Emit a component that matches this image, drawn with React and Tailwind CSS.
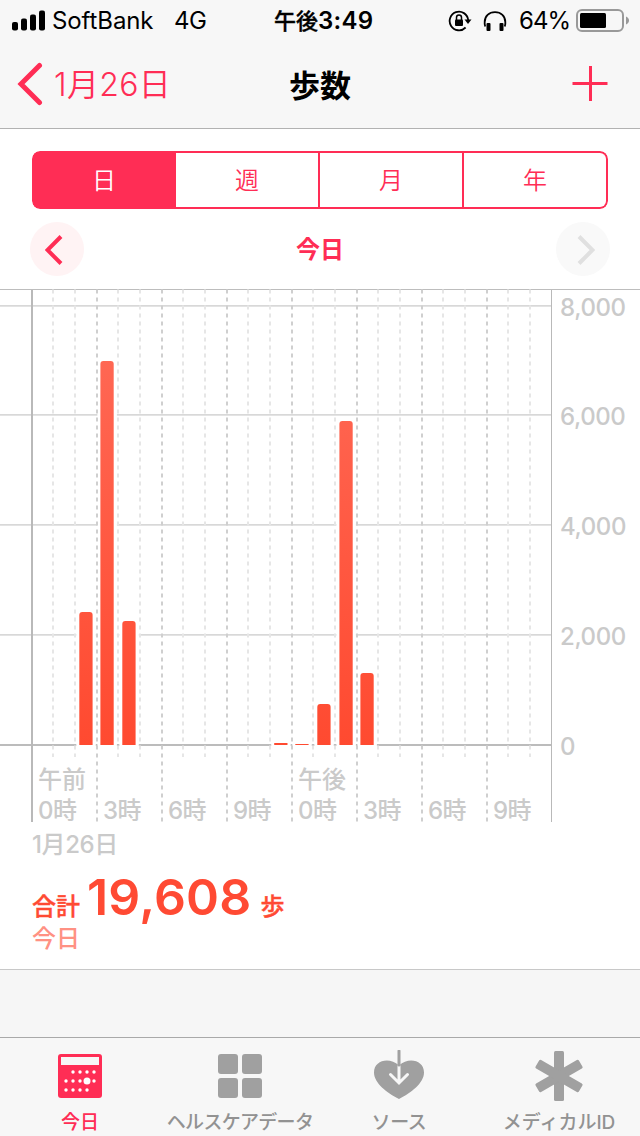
import { useState } from "react";

const periods = ["日", "週", "月", "年"];

// one bar per hour that has steps
const bars = [
  { x: 79.3, top: 612 },
  { x: 100.4, top: 361 },
  { x: 122.3, top: 621 },
  { x: 274.2, top: 743 },
  { x: 295.3, top: 744 },
  { x: 317.3, top: 704 },
  { x: 339.4, top: 421 },
  { x: 360.4, top: 673 },
];

const yLabels = [
  { y: 306, text: "8,000" },
  { y: 415, text: "6,000" },
  { y: 525, text: "4,000" },
  { y: 635, text: "2,000" },
  { y: 745, text: "0" },
];

const hourLabels = ["0時", "3時", "6時", "9時", "0時", "3時", "6時", "9時"];

function StatusBar() {
  return (
    <div className="relative flex h-[42px] items-center justify-between pl-3 pr-[11px] text-[24px] text-black">
      <div className="flex items-center">
        <svg className="-mt-[1px]" width="34" height="22" viewBox="0 0 34 22">
          <rect x="0" y="12" width="6" height="8.5" rx="2" />
          <rect x="9" y="8.5" width="6" height="12" rx="2" />
          <rect x="18" y="4.5" width="6" height="16" rx="2" />
          <rect x="27" y="0.5" width="6" height="20" rx="2" />
        </svg>
        <span className="ml-[6px] w-[122px] tracking-[-0.1px]">SoftBank</span>
        <span className="tracking-[-0.5px]">4G</span>
      </div>
      <div className="absolute left-[274px] top-0 flex h-[42px] items-center whitespace-nowrap font-semibold">
        <span className="text-[22px] font-medium [-webkit-text-stroke:0.4px_black]">午後</span>
        <span className="text-[24px] tracking-[0.3px]">3:49</span>
      </div>
      <div className="flex items-center">
        <svg className="-mt-[1px]" width="24" height="24" viewBox="0 0 24 24" fill="none" stroke="#000" strokeWidth="1.8">
          <path d="M17.6 18.5A9.3 9.3 0 1 1 20.2 11" />
          <path d="M16.5 10.5h7l-3.5 4.5z" fill="#000" stroke="none" />
          <rect x="7" y="10.5" width="8" height="6.5" rx="1" fill="#000" stroke="none" />
          <path d="M8.500 11V8.500a2.500 2.500 0 0 1 5 0V11" strokeWidth="1.5" />
        </svg>
        <svg className="-mt-[1px] ml-[11px]" width="24" height="24" viewBox="0 0 24 24" fill="none" stroke="#000" strokeWidth="1.8">
          <path d="M2.200 17.500A10.200 10.200 0 0 1 1.700 13C1.700 7 6 3.100 12 3.100S22.300 7 22.300 13a10.200 10.200 0 0 1-.500 4.500" />
          <rect x="3.5" y="14" width="4" height="8" rx="1" fill="#000" stroke="none" />
          <rect x="16.500" y="14" width="4" height="8" rx="1" fill="#000" stroke="none" />
        </svg>
        <span className="ml-3 w-[51px] tracking-[-0.9px]">64%</span>
        <svg className="-mt-[2px] ml-[6px]" width="53" height="24" viewBox="0 0 53 24">
          <rect x="1" y="2" width="46" height="21" rx="5" fill="none" stroke="#999" strokeWidth="2" />
          <rect x="4" y="5" width="26" height="15" rx="1.5" />
          <path d="M50 8.500c4 1.500 4 6.500 0 8z" fill="#999" />
        </svg>
      </div>
    </div>
  );
}

function NavBar() {
  return (
    <div className="grid h-[86px] grid-cols-3 items-center">
      <button className="flex items-center pl-[17px] text-[32px] text-[#ff2d55]">
        <svg className="-mt-[2px]" width="26" height="44" viewBox="0 0 26 44" fill="none" stroke="currentColor" strokeWidth="5" strokeLinecap="round" strokeLinejoin="miter">
          <path d="M22.500 3.500L4 22l18.500 18.500" />
        </svg>
        <span className="ml-[11px] whitespace-nowrap font-[350] tracking-[0.3px]">1月26日</span>
      </button>
      <h1 className="text-center text-[31px] font-bold leading-none text-black">歩数</h1>
      <svg className="-mt-[3px] mr-8 justify-self-end" width="36" height="36" viewBox="0 0 36 36" stroke="#ff2d55" strokeWidth="3">
        <path d="M0.500 17.500h35M18.500 0v35" />
      </svg>
    </div>
  );
}

function Chart() {
  const hours = Array.from({ length: 23 }, (_, i) => i + 1);
  return (
    <svg className="block shrink-0" width="640" height="543" viewBox="0 289 640 543">
      <defs>
        <linearGradient id="steps" gradientUnits="userSpaceOnUse" x1="0" y1="306" x2="0" y2="745">
          <stop offset="0" stopColor="#ff6b58" />
          <stop offset="1" stopColor="#ff4a30" />
        </linearGradient>
      </defs>
      <rect x="0" y="289" width="640" height="1" fill="#bdbdbd" />
      {yLabels.map((l) => (
        <rect key={l.y} x="0" y={l.y - 1} width="551" height={l.y === 745 ? 2 : 1.7} fill={l.y === 745 ? "#bcbcbc" : "#d8d8d8"} />
      ))}
      {bars.map((b) => (
        <rect key={b.x} x={b.x - 3} y={b.top - 3} width="19.5" height={749 - b.top} fill="#fff" />
      ))}
      {hours.map((h) => {
        const x = Math.floor(32 + (h * 65) / 3);
        const major = h % 3 === 0;
        return (
          <line key={h} x1={x} x2={x} y1="289.5" y2={major ? 822 : 757} stroke={major ? "#cfcfcf" : "#e6e6e6"} strokeWidth="2" strokeDasharray="4 4" />
        );
      })}
      <rect x="31" y="290" width="2" height="532" fill="#b9b9b9" />
      <rect x="551" y="290" width="1" height="532" fill="#b9b9b9" />
      {bars.map((b) => (
        <path
          key={b.x}
          fill="url(#steps)"
          d={
            745 - b.top > 5
              ? `M${b.x} 745V${b.top + 3}q0-3 3-3h7.300q3 0 3 3V745z`
              : `M${b.x} 745V${b.top}h13.300V745z`
          }
        />
      ))}
      <g fill="#cacaca" fontSize="24" fontWeight="500">
        {yLabels.map((l) => (
          <text key={l.y} x="560" y={l.y + 10} letterSpacing="-0.4">{l.text}</text>
        ))}
        <text x="38" y="787.5">午前</text>
        <text x="298" y="787.5">午後</text>
        {hourLabels.map((t, i) => (
          <text key={i} x={38 + i * 65} y="819" letterSpacing="-0.5">{t}</text>
        ))}
      </g>
    </svg>
  );
}

function Summary() {
  return (
    <div className="h-[137px] shrink-0 pl-8 text-[24px] font-medium">
      <p className="h-[27px] leading-[26px] tracking-[-0.4px] text-[#cacaca]">1月26日</p>
      <p className="flex h-[62px] items-baseline whitespace-nowrap font-semibold text-[#ff4a33]">
        <span className="text-[24px] font-medium [-webkit-text-stroke:0.4px_#ff4a33]">合計</span>
        <span className="ml-[7px] text-[50px] leading-[76px] tracking-[0.2px]">19,608</span>
        <span className="ml-[9px] text-[24px] font-medium [-webkit-text-stroke:0.4px_#ff4a33]">歩</span>
      </p>
      <p className="leading-[36px] text-[#ff9183]">今日</p>
    </div>
  );
}

function CalendarIcon() {
  const dots = [
    [15, 18], [22, 18], [29, 18], [36, 18],
    [8, 27], [15, 27], [22, 27], [36, 27],
    [8, 36], [15, 36], [22, 36], [29, 36],
  ];
  return (
    <svg width="50" height="52" viewBox="-3 -4 50 52">
      <rect width="44" height="44" rx="3" fill="currentColor" />
      <rect x="3" y="3" width="38" height="8" fill="#f7f7f7" />
      {dots.map(([x, y]) => (
        <circle key={`${x}-${y}`} cx={x} cy={y} r="1.7" fill="#fff" />
      ))}
      <circle cx="29" cy="27" r="3.5" fill="#fff" />
    </svg>
  );
}

function DataIcon() {
  return (
    <svg width="50" height="52" viewBox="-3 -4 50 52" fill="currentColor">
      <rect width="20" height="20" rx="3" />
      <rect x="24" width="20" height="20" rx="3" />
      <rect y="24" width="20" height="20" rx="3" />
      <rect x="24" y="24" width="20" height="20" rx="3" />
    </svg>
  );
}

function SourceIcon() {
  return (
    <svg className="mr-[2px]" width="50" height="52" viewBox="0 0 50 52" fill="none">
      <path d="M25 49C13 43 0 33 0 22.500 0 10.500 15 6.500 25 15.500 35 6.500 50 10.500 50 22.500 50 33 37 43 25 49z" fill="currentColor" />
      <path d="M25 16v16M16.500 24.500l8.500 8.500 8.500-8.500" stroke="#f7f7f7" strokeWidth="3" strokeLinecap="round" />
      <path d="M25 1v14" stroke="currentColor" strokeWidth="3" strokeLinecap="round" />
    </svg>
  );
}

function MedicalIcon() {
  return (
    <svg className="mr-[2px]" width="50" height="52" viewBox="0 0 50 52" fill="currentColor">
      <rect x="20" y="1" width="10" height="50" rx="1.5" />
      <rect x="20" y="1" width="10" height="50" rx="1.5" transform="rotate(60 25 26)" />
      <rect x="20" y="1" width="10" height="50" rx="1.5" transform="rotate(-60 25 26)" />
    </svg>
  );
}

const tabs = [
  { label: "今日", Icon: CalendarIcon, text: "" },
  { label: "ヘルスケアデータ", Icon: DataIcon, text: "text-[#929292] tracking-[-0.7px]" },
  { label: "ソース", Icon: SourceIcon, text: "text-[#929292] mr-[2px] tracking-[-0.4px]" },
  { label: "メディカルID", Icon: MedicalIcon, text: "text-[#929292] mr-[2px]" },
];

export default function App() {
  const [period, setPeriod] = useState(0);

  return (
    <div className="flex h-[1136px] w-[640px] flex-col overflow-hidden bg-white font-['Inter','Noto_Sans_CJK_JP',sans-serif]">
      <header className="h-[129px] shrink-0 border-b border-[#b2b2b2] bg-[#f7f7f7]">
        <StatusBar />
        <NavBar />
      </header>

      <div className="mx-8 mt-[22px] grid h-[58px] shrink-0 grid-cols-4 overflow-hidden rounded-lg text-[#ff2d55]">
        {periods.map((p, i) => (
          <button
            key={p}
            onClick={() => setPeriod(i)}
            className={`border-y-2 border-r-2 border-[#ff2d55] pt-[1px] text-[24px] font-[350] first:rounded-l-lg first:border-l-2 last:rounded-r-lg ${period === i ? "bg-[#ff2d55] text-white" : ""}`}
          >
            {p}
          </button>
        ))}
      </div>

      <div className="flex h-20 shrink-0 items-center justify-between px-[30px] text-[#ff2d55]">
        <button className="flex size-[54px] items-center justify-center rounded-full bg-[#fff3f4]">
          <svg width="18" height="30" viewBox="0 0 18 30" fill="none" stroke="currentColor" strokeWidth="4" className="mr-[6px] mt-[2px]">
            <path d="M16 1.500L2.500 15 16 28.500" />
          </svg>
        </button>
        <span className="pt-[2px] text-[24px] font-bold">今日</span>
        <button className="flex size-[54px] items-center justify-center rounded-full bg-[#f9f9f9] text-[#e0e0e0]">
          <svg width="18" height="30" viewBox="0 0 18 30" fill="none" stroke="currentColor" strokeWidth="4" className="ml-[6px] mt-[2px]">
            <path d="M2 1.500L15.500 15 2 28.500" />
          </svg>
        </button>
      </div>

      <Chart />
      <Summary />

      <div className="h-[68px] shrink-0 border-t border-[#c8c8c8] bg-[#f6f6f6]" />

      <nav className="grid h-[99px] shrink-0 grid-cols-4 border-t border-[#a9a9a9] bg-[#f7f7f7]">
        {tabs.map(({ label, Icon, text }, i) => (
          <button key={label} className={`flex flex-col items-center pt-3 ${i === 0 ? "text-[#ff2d55]" : "text-[#a0a0a0]"}`}>
            <Icon />
            <span className={`mt-[7px] whitespace-nowrap text-[19px] font-medium leading-7 ${text}`}>{label}</span>
          </button>
        ))}
      </nav>
    </div>
  );
}
